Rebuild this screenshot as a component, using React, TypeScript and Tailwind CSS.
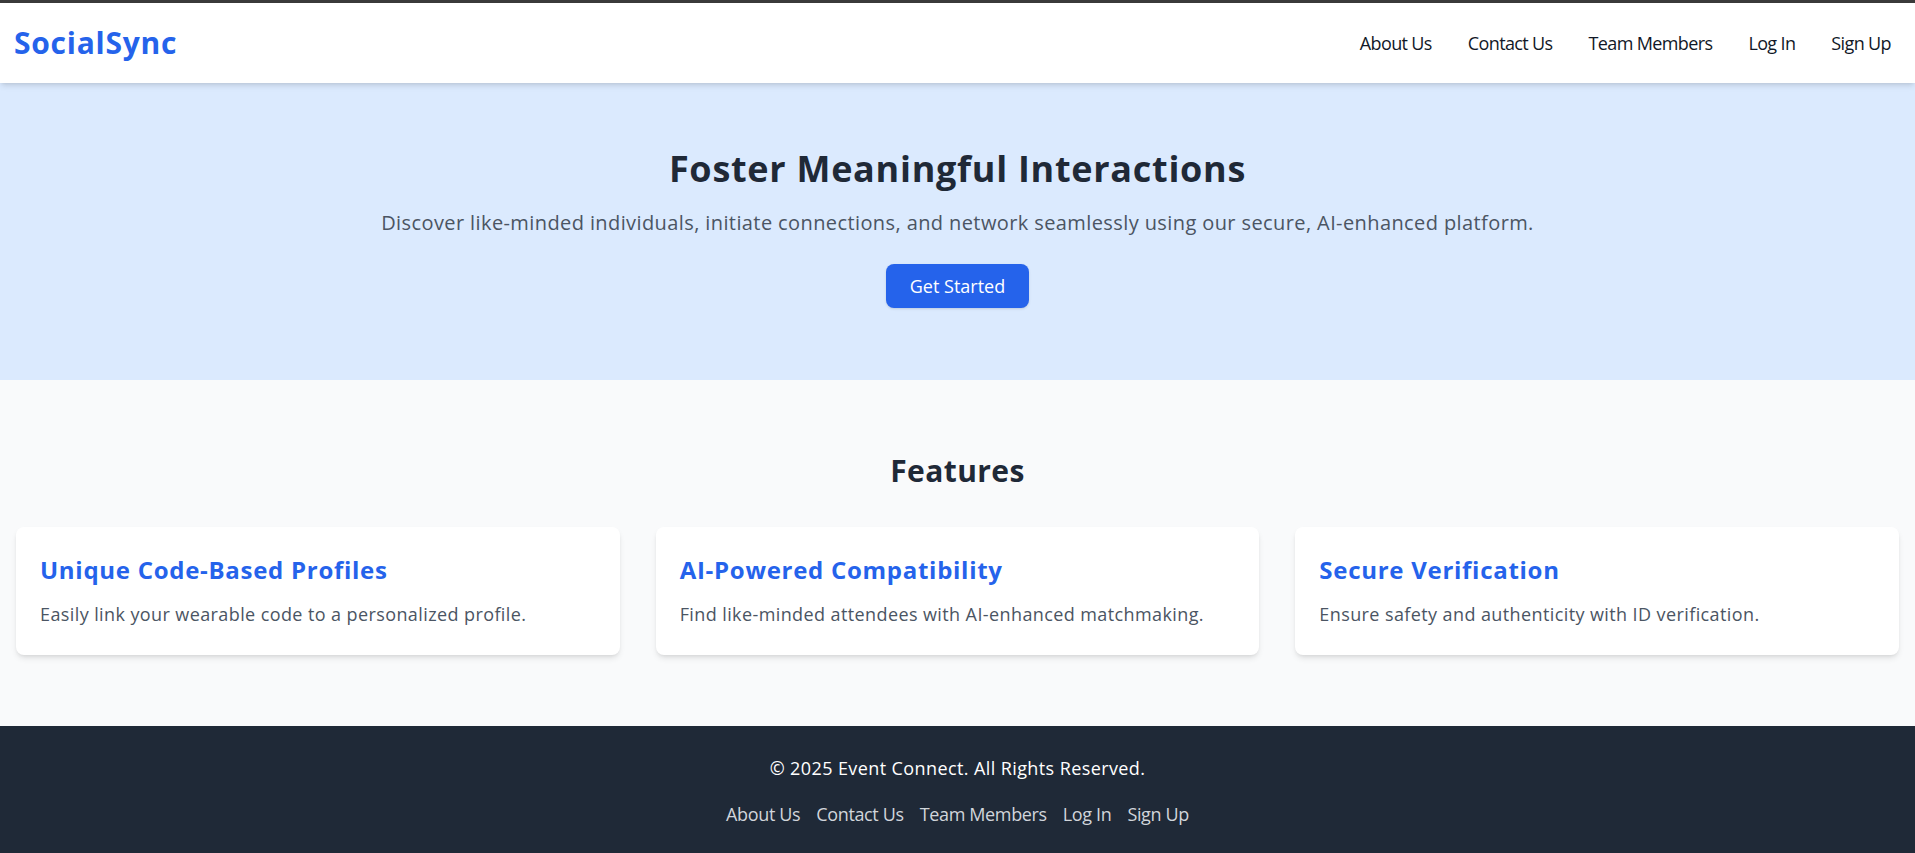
const navLinks = ["About Us", "Contact Us", "Team Members", "Log In", "Sign Up"];

const features = [
  {
    title: "Unique Code-Based Profiles",
    text: "Easily link your wearable code to a personalized profile.",
  },
  {
    title: "AI-Powered Compatibility",
    text: "Find like-minded attendees with AI-enhanced matchmaking.",
  },
  {
    title: "Secure Verification",
    text: "Ensure safety and authenticity with ID verification.",
  },
];

export default function App() {
  return (
    <div className="min-h-screen bg-[#f9fafb] font-['Open_Sans',sans-serif] tracking-[0.025em]">
      {/* Top bar */}
      <div className="h-[3px] bg-[#3a3a3a]" />

      {/* Header */}
      <header className="relative z-10 flex h-20 items-center justify-between bg-white pl-3.5 pr-6 shadow-md">
        <h1 className="text-3xl font-bold tracking-[0.025em] text-[#2563eb]">SocialSync</h1>
        <nav className="flex items-center gap-9">
          {navLinks.map((l) => (
            <a key={l} href="#" className="text-lg tracking-[-0.035em] text-[#111827]">
              {l}
            </a>
          ))}
        </nav>
      </header>

      {/* Hero */}
      <section className="bg-[#dbeafe] pt-[66px] pb-[72px] text-center">
        <h2 className="text-4xl font-bold tracking-[0.02em] text-[#1f2937]">Foster Meaningful Interactions</h2>
        <p className="mt-5 text-xl text-[#4b5563]">
          Discover like-minded individuals, initiate connections, and network seamlessly using our secure, AI-enhanced platform.
        </p>
        <button className="mt-[27px] rounded-lg bg-[#2563eb] px-6 py-2 text-lg tracking-normal text-white shadow">
          Get Started
        </button>
      </section>

      {/* Features */}
      <section className="bg-[#f9fafb] px-4 pt-[73px] pb-[71px]">
        <h2 className="mb-[38px] text-center text-3xl font-bold text-[#1f2937]">Features</h2>
        <div className="grid grid-cols-3 gap-9">
          {features.map((f) => (
            <div key={f.title} className="rounded-lg bg-white px-6 pt-[27px] pb-[27px] shadow-md">
              <h3 className="mb-[14px] text-2xl font-bold tracking-[0.03em] text-[#2563eb]">{f.title}</h3>
              <p className="text-lg text-[#4b5563]">{f.text}</p>
            </div>
          ))}
        </div>
      </section>

      {/* Footer */}
      <footer className="bg-[#1f2937] pt-7 pb-8 text-center">
        <p className="text-lg text-white">© 2025 Event Connect. All Rights Reserved.</p>
        <div className="mt-[18px] flex justify-center gap-4">
          {navLinks.map((l) => (
            <a key={l} href="#" className="text-lg tracking-[-0.02em] text-[#d1d5db]">
              {l}
            </a>
          ))}
        </div>
      </footer>
    </div>
  );
}
